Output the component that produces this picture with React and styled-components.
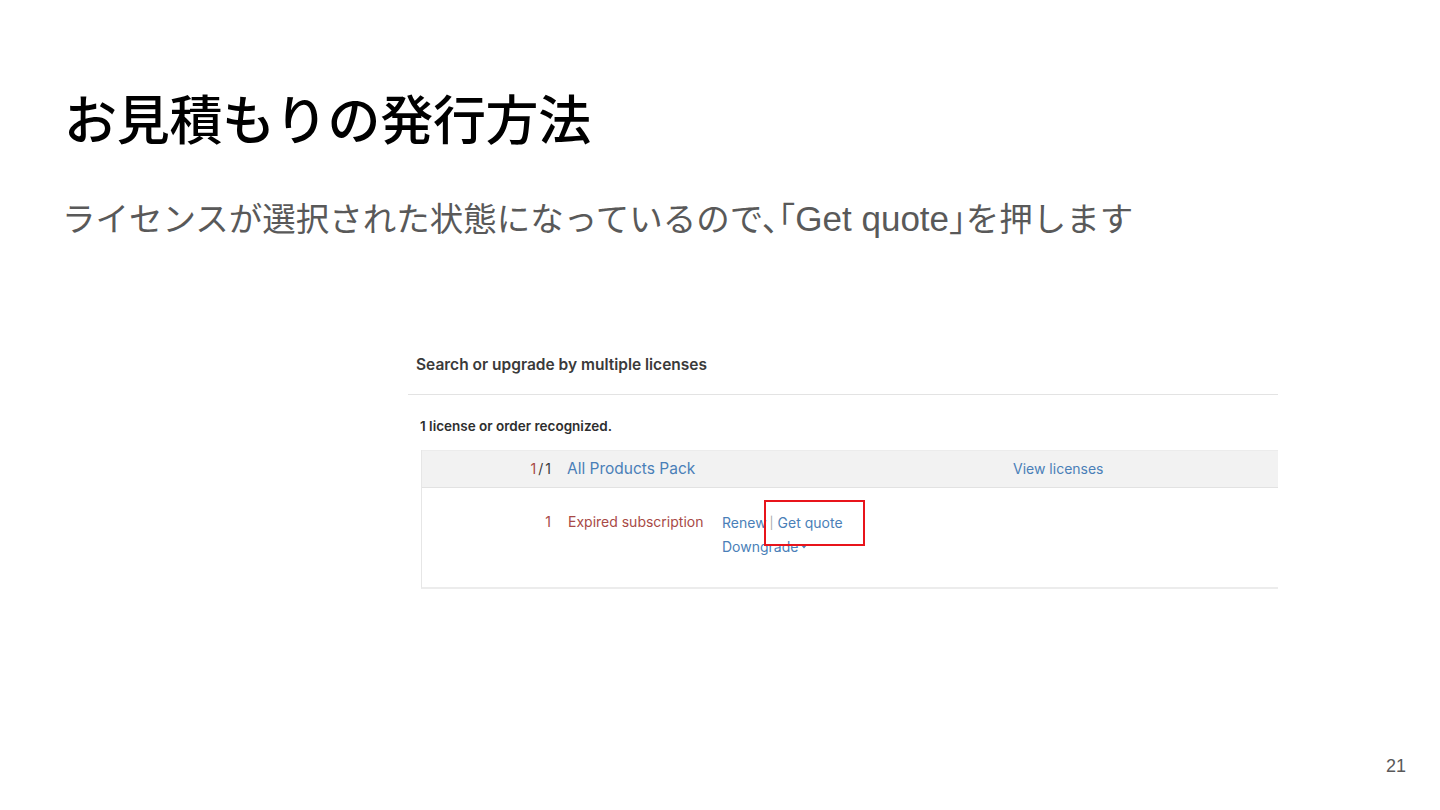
import styled, { createGlobalStyle } from "styled-components";

const GlobalStyle = createGlobalStyle`
  html, body {
    margin: 0;
    padding: 0;
    background: #ffffff;
  }
  * {
    box-sizing: border-box;
  }
`;

export default function App() {
  return (
    <>
      <GlobalStyle />
      <Slide>
        <Title>お見積もりの発行方法</Title>
        <Subtitle>
          ライセンスが選択された状態になっているので、「<Latin>Get quote</Latin>」を押します
        </Subtitle>
        <Shot>
          <ShotHeading>Search or upgrade by multiple licenses</ShotHeading>
          <Recognized>1 license or order recognized.</Recognized>
          <Table>
            <HeadRow>
              <Count>
                <Red>1</Red>
                <Slash>/</Slash>1
              </Count>
              <PackName>All Products Pack</PackName>
              <ViewLink>View licenses</ViewLink>
            </HeadRow>
            <BodyRow>
              <Count $red>1</Count>
              <Status>Expired subscription</Status>
              <Actions>
                <ActionLine>
                  <Link>Renew</Link>
                  <Sep>|</Sep>
                  <Link>Get quote</Link>
                </ActionLine>
                <ActionLine>
                  <Link>Downgrade</Link>
                  <Caret>
                    <svg width="8" height="6" viewBox="0 0 8 6">
                      <path d="M0 1h8L4 5.5z" fill="#4a7fb8" />
                    </svg>
                  </Caret>
                </ActionLine>
                <Highlight />
              </Actions>
            </BodyRow>
          </Table>
        </Shot>
        <PageNum>21</PageNum>
      </Slide>
    </>
  );
}

const Slide = styled.div`
  width: 1440px;
  height: 810px;
  display: flex;
  flex-direction: column;
  padding: 85px 34px 0 64px;
  font-family: "Liberation Sans", "Noto Sans CJK JP", sans-serif;
  overflow: hidden;
`;

const Title = styled.h1`
  margin: 0;
  font-family: "Noto Sans CJK JP", sans-serif;
  font-size: 53px;
  line-height: 64px;
  font-weight: 500;
  color: #000000;
  letter-spacing: -0.3px;
`;

const Subtitle = styled.p`
  margin: 48px 0 0 -2px;
  font-family: "Noto Sans CJK JP", sans-serif;
  font-size: 33.5px;
  line-height: 40px;
  color: #595959;
  font-feature-settings: "halt";
  white-space: nowrap;
`;

const Latin = styled.span`
  font-family: "Liberation Sans", sans-serif;
  font-size: 35px;
`;

const Shot = styled.div`
  margin: 106px 0 0 344px;
  width: 870px;
  font-family: "Inter", "Liberation Sans", sans-serif;
  background: #ffffff;
`;

const ShotHeading = styled.div`
  padding: 10px 8px 19px;
  font-size: 15.5px;
  line-height: 20px;
  font-weight: 600;
  color: #3a3a3a;
  border-bottom: 1px solid #e3e3e3;
`;

const Recognized = styled.div`
  margin: 22px 0 0 12px;
  font-size: 13.5px;
  line-height: 18px;
  font-weight: 600;
  color: #2e2e2e;
`;

const Table = styled.div`
  margin: 15px 0 0 13px;
  border-left: 1px solid #e6e6e6;
  border-bottom: 2px solid #ececec;
`;

const HeadRow = styled.div`
  display: flex;
  align-items: center;
  height: 38px;
  background: #f2f2f2;
  border-top: 1px solid #ececec;
  border-bottom: 1px solid #e2e2e2;
`;

const BodyRow = styled.div`
  display: flex;
  align-items: flex-start;
  height: 99px;
  padding-top: 22px;
`;

const Count = styled.div`
  width: 129px;
  text-align: right;
  font-size: 14px;
  line-height: 24px;
  color: ${(p) => (p.$red ? "#a84a46" : "#3a3a3a")};
`;

const Red = styled.span`
  color: #a84a46;
`;

const Slash = styled.span`
  margin: 0 2px;
`;

const PackName = styled.div`
  margin-left: 16px;
  width: 446px;
  font-size: 15.5px;
  line-height: 24px;
  color: #4a7fb8;
`;

const ViewLink = styled.div`
  font-size: 14px;
  line-height: 24px;
  color: #4a7fb8;
`;

const Status = styled.div`
  margin-left: 17px;
  width: 154px;
  font-size: 14px;
  line-height: 24px;
  color: #a84a46;
`;

const Actions = styled.div`
  position: relative;
  display: flex;
  flex-direction: column;
`;

const ActionLine = styled.div`
  display: flex;
  align-items: center;
  height: 24px;
  font-size: 14px;
  color: #4a7fb8;
`;

const Link = styled.span`
  color: #4a7fb8;
`;

const Sep = styled.span`
  margin: 0 4px 0 3px;
  font-size: 12px;
  color: #a8a8a8;
`;

const Caret = styled.span`
  display: inline-flex;
  margin-left: 2px;
`;

const Highlight = styled.div`
  position: absolute;
  left: 42px;
  top: -10px;
  width: 101px;
  height: 46px;
  border: 2px solid #e8141b;
`;

const PageNum = styled.div`
  margin-top: auto;
  margin-bottom: 33px;
  align-self: flex-end;
  font-size: 18px;
  line-height: 22px;
  color: #595959;
`;
